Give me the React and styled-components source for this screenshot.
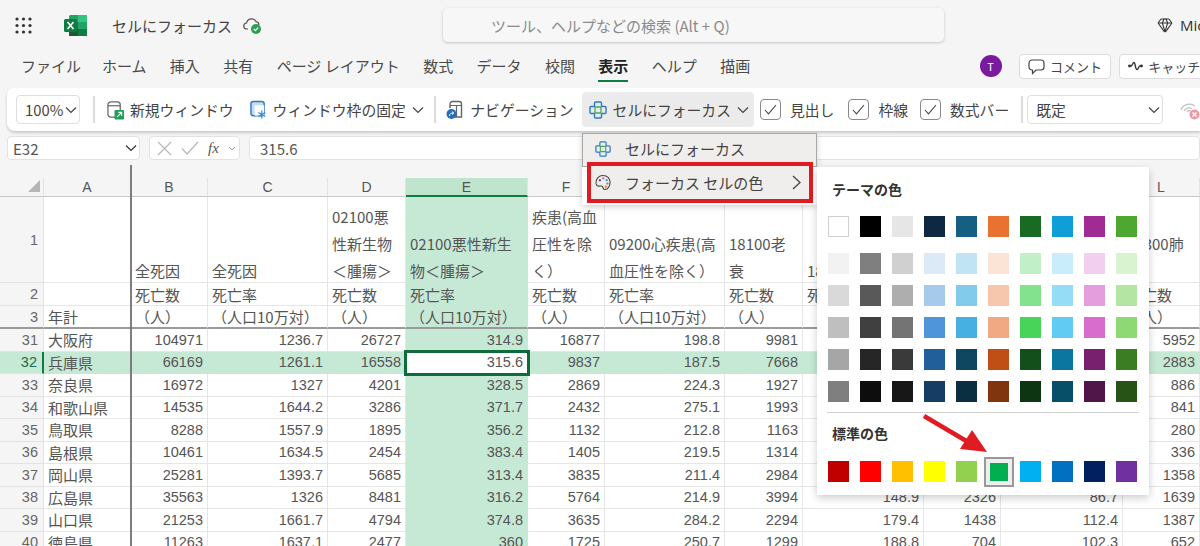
import { styled, createGlobalStyle } from "styled-components";
import { Gem } from "lucide-react";

const GlobalStyle = createGlobalStyle`
  html, body { margin: 0; padding: 0; background: #f5f5f5; }
  body { font-family: "Noto Sans CJK JP", "Noto Sans", sans-serif; color: #444; }
  svg { flex-shrink: 0; }
`;

const Page = styled.div`
  position: relative;
  width: 1200px;
  height: 546px;
  overflow: hidden;
  background: #f5f5f5;
`;

const TitleBar = styled.div`
  height: 50px;
  display: flex;
  align-items: center;
  padding-left: 15px;
`;

const DocTitle = styled.div`
  margin-left: 25px;
  font-size: 15px;
  color: #444;
  white-space: nowrap;
  flex-shrink: 0;
`;

const Search = styled.div`
  margin-left: 181px;
  width: 501px;
  height: 34px;
  box-sizing: border-box;
  padding-left: 48px;
  display: flex;
  align-items: center;
  flex-shrink: 0;
  background: #f7f7f7;
  border-radius: 5px;
  box-shadow: 0 1px 3px rgba(0, 0, 0, 0.2);
  font-size: 15px;
  color: #8a8a8a;
  white-space: nowrap;
`;

const Premium = styled.div`
  margin-left: 213px;
  display: flex;
  align-items: center;
  gap: 7px;
  font-family: "Open Sans", sans-serif;
  font-size: 15px;
  color: #333;
  flex-shrink: 0;
`;

const TabBar = styled.div`
  height: 38px;
  box-sizing: border-box;
  padding: 0 0 6px 21px;
  display: flex;
  align-items: center;
  gap: 23.4px;
`;

const Tab = styled.div`
  position: relative;
  margin-right: ${(p) => p.$mr || 0}px;
  font-size: 15px;
  line-height: 22px;
  font-weight: ${(p) => (p.$active ? 700 : 400)};
  color: ${(p) => (p.$active ? "#222" : "#4a4a4a")};
  white-space: nowrap;
  flex-shrink: 0;
  &::after {
    content: "";
    display: ${(p) => (p.$active ? "block" : "none")};
    position: absolute;
    left: 0;
    right: 0;
    bottom: -5px;
    height: 2px;
    background: #107c41;
  }
`;

const Avatar = styled.div`
  margin-left: 206px;
  width: 22px;
  height: 22px;
  border-radius: 50%;
  background: #7a1a9e;
  color: #fff;
  font-size: 11px;
  display: flex;
  align-items: center;
  justify-content: center;
  flex-shrink: 0;
`;

const PillButton = styled.div`
  margin-left: ${(p) => p.$ml}px;
  height: 25px;
  box-sizing: border-box;
  padding: 0 8px;
  display: flex;
  align-items: center;
  gap: 5px;
  flex-shrink: 0;
  background: #fff;
  border: 1px solid #dcdcdc;
  border-radius: 4px;
  font-size: 13px;
  color: #444;
  white-space: nowrap;
`;

const Ribbon = styled.div`
  margin-left: 7px;
  height: 43px;
  padding-left: 9px;
  display: flex;
  align-items: center;
  background: #fff;
  border-radius: 8px 0 0 8px;
  box-shadow: 0 2px 3px rgba(0, 0, 0, 0.18);
  font-size: 14.8px;
  color: #444;
  white-space: nowrap;
`;

const Separator = styled.div`
  margin-left: ${(p) => p.$ml}px;
  width: 2px;
  height: 27px;
  background: #dcdcdc;
  flex-shrink: 0;
`;

const SelectBox = styled.div`
  margin-left: ${(p) => p.$ml || 0}px;
  width: ${(p) => p.$w}px;
  height: 29px;
  box-sizing: border-box;
  padding: 0 2px 0 8px;
  display: flex;
  align-items: center;
  justify-content: space-between;
  flex-shrink: 0;
  background: #fff;
  border: 1px solid #e0e0e0;
  border-radius: 4px;
`;

const RibbonButton = styled.div`
  margin-left: ${(p) => p.$ml}px;
  display: flex;
  align-items: center;
  gap: ${(p) => p.$gap || 6}px;
  flex-shrink: 0;
`;

const ActiveRibbonButton = styled(RibbonButton)`
  height: 35px;
  padding: 0 5px 0 7px;
  background: #ebebeb;
  border-radius: 4px;
`;

const CheckBox = styled.div`
  width: 21px;
  height: 21px;
  box-sizing: border-box;
  display: flex;
  align-items: center;
  justify-content: center;
  border: 1px solid #8a8a8a;
  border-radius: 4px;
  color: #444;
`;

const FormulaBar = styled.div`
  margin-top: 5px;
  height: 24px;
  padding-left: 7px;
  display: flex;
`;

const FormulaBox = styled.div`
  box-sizing: border-box;
  margin-left: ${(p) => p.$ml || 0}px;
  width: ${(p) => (p.$w ? `${p.$w}px` : "auto")};
  flex: ${(p) => (p.$w ? "0 0 auto" : "1")};
  padding: 0 ${(p) => p.$pr || 0}px 0 ${(p) => p.$pl}px;
  display: flex;
  align-items: center;
  justify-content: ${(p) => (p.$between ? "space-between" : "flex-start")};
  background: #fff;
  border: 1px solid #e2e2e2;
  border-radius: 4px;
  font-size: 15px;
  color: #555;
`;

const FxText = styled.span`
  font-family: "Liberation Serif", serif;
  font-style: italic;
  font-size: 15px;
  color: #555;
`;

const Sheet = styled.div`
  position: relative;
  padding-top: 18px;
  display: grid;
  grid-template-columns: 44px 87px 77px 120px 78px 122px 77px 120px 78px 121px 77px 122px 77px 1fr;
  grid-template-rows: 19px 86px 23px 23px;
  grid-auto-rows: 22.5px;
`;

const FreezeLine = styled.div`
  position: absolute;
  left: 130px;
  top: 5px;
  bottom: 0;
  width: 2px;
  background: #7d7d7d;
  z-index: 2;
`;

const Corner = styled.div`
  display: flex;
  align-items: flex-end;
  justify-content: flex-end;
  padding: 0 3px 4px 0;
  border-right: 1px solid #e2e2e2;
  border-bottom: 1px solid #c8c8c8;
`;

const ColHead = styled.div`
  display: flex;
  align-items: center;
  justify-content: center;
  font-family: "Liberation Sans", sans-serif;
  font-size: 14px;
  color: #555;
  background: ${(p) => (p.$active ? "#bfe5cf" : "#f5f5f5")};
  border-right: 1px solid #e2e2e2;
  border-bottom: ${(p) => (p.$active ? "2px solid #107c41" : "1px solid #c8c8c8")};
`;

const RowHead = styled.div`
  display: flex;
  align-items: center;
  justify-content: flex-end;
  padding-right: 5px;
  font-family: "Liberation Sans", sans-serif;
  font-size: 14.5px;
  color: ${(p) => (p.$active ? "#1f6b43" : "#666")};
  background: ${(p) => (p.$active ? "#c6e9d5" : "#f5f5f5")};
  border-right: ${(p) => (p.$active ? "2px solid #107c41" : "1px solid #e2e2e2")};
  border-bottom: ${(p) => (p.$heavy ? "2px solid #9a9a9a" : "1px solid #e2e2e2")};
`;

const Cell = styled.div`
  position: relative;
  box-sizing: border-box;
  padding: 0 4px;
  display: flex;
  align-items: center;
  justify-content: ${(p) => (p.$num ? "flex-end" : "flex-start")};
  overflow: hidden;
  white-space: nowrap;
  font-family: ${(p) =>
    p.$num ? '"Liberation Sans", sans-serif' : '"Noto Sans CJK JP", sans-serif'};
  font-size: ${(p) => (p.$num ? 14.5 : 15)}px;
  color: #555;
  background: ${(p) => (p.$hl ? "#c6e9d5" : "#fff")};
  border-right: 1px solid ${(p) => (p.$hl ? "#c6e9d5" : "#e6e6e6")};
  border-bottom: ${(p) =>
    p.$heavy ? "2px solid #9a9a9a" : `1px solid ${p.$hl ? "#c6e9d5" : "#e6e6e6"}`};
`;

const HeadCell = styled(Cell)`
  flex-direction: column;
  align-items: flex-start;
  justify-content: flex-end;
  line-height: 27px;
  & > div:last-child {
    margin-bottom: -2px;
  }
`;

const FocusCell = styled(Cell)`
  background: #fff;
  overflow: visible;
  z-index: 1;
  outline: 3px solid #0e6b3a;
  outline-offset: -1px;
`;

const Menu = styled.div`
  position: absolute;
  left: 582px;
  top: 133px;
  width: 235px;
  display: flex;
  flex-direction: column;
  background: #fff;
  box-shadow: 0 2px 6px rgba(0, 0, 0, 0.18);
  font-size: 15px;
  color: #444;
  z-index: 3;
`;

const MenuItem = styled.div`
  height: 34px;
  box-sizing: border-box;
  padding: 0 0 3px 12px;
  display: flex;
  align-items: center;
  gap: 14px;
  background: #efeeec;
  border: 1px solid #a8a8a8;
`;

const MarkedMenuItem = styled.div`
  position: relative;
  height: 41px;
  box-sizing: border-box;
  margin: -5px 4px 2px 5px;
  padding: 0 8px 0 4px;
  display: flex;
  align-items: center;
  gap: 14px;
  background: #efeeec;
  border: 4px solid #e01b22;
`;

const ItemArrow = styled.span`
  margin-left: auto;
  display: flex;
`;

const PalettePanel = styled.div`
  position: absolute;
  left: 817px;
  top: 167px;
  width: 332px;
  height: 328px;
  box-sizing: border-box;
  padding: 13px 0 0 11px;
  background: #fff;
  box-shadow: 0 3px 8px rgba(0, 0, 0, 0.2);
  z-index: 3;
`;

const PaletteTitle = styled.div`
  margin: ${(p) => p.$mt || 0}px 0 ${(p) => p.$mb}px 4px;
  font-size: 14px;
  line-height: 18px;
  font-weight: 700;
  color: #333;
`;

const SwatchGrid = styled.div`
  display: grid;
  grid-template-columns: repeat(10, 21px);
  grid-auto-rows: 21px;
  gap: 11px;
  margin-bottom: ${(p) => p.$mb || 0}px;
`;

const Swatch = styled.div`
  box-sizing: border-box;
  width: ${(p) => (p.$selected ? 18 : 21)}px;
  height: ${(p) => (p.$selected ? 18 : 21)}px;
  place-self: center;
  background: ${(p) => p.$color};
  border: ${(p) => (p.$outlined ? "1px solid #cfcfcf" : "none")};
  box-shadow: ${(p) => (p.$selected ? "0 0 0 4px #eee, 0 0 0 6px #999" : "none")};
`;

const Divider = styled.div`
  width: 312px;
  height: 1px;
  margin-left: -1px;
  background: #d0d0d0;
`;

const ArrowMark = styled.svg`
  position: absolute;
  left: 918px;
  top: 410px;
  z-index: 4;
`;

const Chevron = ({ color = "#444" }) => (
  <svg width="12" height="8" viewBox="0 0 12 8">
    <path d="M1 1.5 L6 6.5 L11 1.5" fill="none" stroke={color} strokeWidth="1.2" />
  </svg>
);

const Tick = () => (
  <svg width="13" height="11" viewBox="0 0 13 11">
    <path d="M1 6 L4.5 9.8 L12 1" fill="none" stroke="#444" strokeWidth="1.1" />
  </svg>
);

const CancelMark = () => (
  <svg width="15" height="15" viewBox="0 0 15 15">
    <path d="M1 1 L14 14 M14 1 L1 14" stroke="#b8b8b8" strokeWidth="1.2" />
  </svg>
);

const EnterMark = () => (
  <svg width="18" height="14" viewBox="0 0 18 14">
    <path d="M1 7.5 L6 13 L17 1" fill="none" stroke="#b8b8b8" strokeWidth="1.2" />
  </svg>
);

const Waffle = () => (
  <svg width="17" height="17" viewBox="0 0 17 17" fill="#333">
    {[2, 8.5, 15].map((y) =>
      [2, 8.5, 15].map((x) => <circle key={`${x}-${y}`} cx={x} cy={y} r="1.6" />)
    )}
  </svg>
);

const ExcelLogo = () => (
  <svg width="23" height="21" viewBox="0 0 23 21" style={{ marginLeft: 32 }}>
    <rect x="5" y="0" width="18" height="21" rx="1.5" fill="#21a366" />
    <rect x="14" y="0" width="9" height="7" fill="#33c481" />
    <rect x="5" y="7" width="9" height="7" fill="#107c41" />
    <rect x="14" y="14" width="9" height="7" fill="#107c41" />
    <rect x="5" y="14" width="9" height="7" fill="#185c37" />
    <rect x="0" y="4" width="13" height="13" rx="1.5" fill="#107c41" />
    <path d="M3.5 7 L9.5 14 M9.5 7 L3.5 14" stroke="#fff" strokeWidth="1.6" />
  </svg>
);

const CloudSaved = () => (
  <svg width="19" height="19" viewBox="0 0 19 19" style={{ marginLeft: 11 }}>
    <path
      d="M5 13 H4 A3 3 0 0 1 3.6 7 A5 5 0 0 1 13 5.6 A3.4 3.4 0 0 1 16 9"
      fill="none"
      stroke="#555"
      strokeWidth="1.2"
    />
    <circle cx="13" cy="13" r="5" fill="#2e9e52" />
    <path d="M10.8 13 L12.4 14.6 L15.2 11.6" fill="none" stroke="#fff" strokeWidth="1.3" />
  </svg>
);

const NewWindowIcon = () => (
  <svg width="17" height="20" viewBox="0 0 18 20">
    <rect x="1" y="1.5" width="13" height="16" rx="3" fill="none" stroke="#666" strokeWidth="1.3" />
    <path d="M1 5.5 H14" stroke="#666" strokeWidth="1.3" />
    <rect x="8" y="10" width="10" height="10" rx="1" fill="#1f9d55" />
    <path d="M10.5 17.5 L15.5 12.5 M12 12.5 H15.5 V16" fill="none" stroke="#fff" strokeWidth="1.2" />
  </svg>
);

const FreezeIcon = () => (
  <svg width="17" height="20" viewBox="0 0 18 20">
    <rect x="1" y="1" width="14" height="15" rx="2.5" fill="#c4ddf5" stroke="#2f78c4" strokeWidth="1.5" />
    <rect x="5" y="5" width="10" height="11" fill="#fff" />
    <path
      d="M12.5 10.5 V19 M8.8 12.6 L16.2 16.9 M16.2 12.6 L8.8 16.9"
      stroke="#2f8ae0"
      strokeWidth="1.3"
    />
  </svg>
);

const NavIcon = () => (
  <svg width="17" height="20" viewBox="0 0 17 20">
    <path d="M4 8 V4 A2.5 2.5 0 0 1 6.5 1.5 H13 A2.5 2.5 0 0 1 15.5 4 V17 H9" fill="none" stroke="#666" strokeWidth="1.4" />
    <path d="M4 5.5 H15.5 M10.5 5.5 V17" stroke="#666" strokeWidth="1.2" />
    <circle cx="5.5" cy="14" r="5" fill="#2470b8" />
    <path d="M3.5 16 C3.5 13.5 5 13 7.5 13 M6 11.5 L7.8 13 L6 14.6" fill="none" stroke="#fff" strokeWidth="1" />
  </svg>
);

const FocusIcon = ({ size = 18 }) => (
  <svg width={size} height={size} viewBox="0 0 18 18">
    <path
      d="M6.5 1 H11.5 A1 1 0 0 1 12.5 2 V5.5 H16 A1 1 0 0 1 17 6.5 V11.5 A1 1 0 0 1 16 12.5 H12.5 V16 A1 1 0 0 1 11.5 17 H6.5 A1 1 0 0 1 5.5 16 V12.5 H2 A1 1 0 0 1 1 11.5 V6.5 A1 1 0 0 1 2 5.5 H5.5 V2 A1 1 0 0 1 6.5 1 Z"
      fill="none"
      stroke="#2b7cc7"
      strokeWidth="1.4"
    />
    <rect x="6" y="6" width="6" height="6" rx="1" fill="#dff0e2" stroke="#4aa564" strokeWidth="1.3" />
  </svg>
);

const PaletteIcon = () => (
  <svg width="16" height="17" viewBox="0 0 17 17">
    <path
      d="M8.5 1 C13 1 16 4 16 8 C16 12 14 16 10.5 16 C8.5 16 9 13.5 7.5 12.5 C6 11.5 4.5 13 2.5 12 C0.5 10.5 1 7 2 5 C3.4 2.4 6 1 8.5 1 Z"
      fill="none"
      stroke="#444"
      strokeWidth="1.2"
    />
    <circle cx="5.2" cy="6.2" r="1.2" fill="#444" />
    <circle cx="8.8" cy="4.2" r="1.2" fill="#d65bb5" />
    <circle cx="12.4" cy="6" r="1.2" fill="#3d8fd6" />
    <circle cx="13.2" cy="9.6" r="1.2" fill="#4aa564" />
    <circle cx="11.6" cy="13" r="1.2" fill="#e07b39" />
  </svg>
);

const MenuArrow = () => (
  <svg width="9" height="15" viewBox="0 0 9 15">
    <path d="M1 1 L8 7.5 L1 14" fill="none" stroke="#444" strokeWidth="1.3" />
  </svg>
);

const EyeOffIcon = () => (
  <svg width="20" height="20" viewBox="0 0 20 20" style={{ marginLeft: 17 }}>
    <path d="M1 10 A9 9 0 0 1 15 6 M4 11 A6 6 0 0 1 12 8.5 M7 12 A3 3 0 0 1 11 11" fill="none" stroke="#c2c2c2" strokeWidth="1.3" />
    <circle cx="14.5" cy="14.5" r="5" fill="#ec9aa0" />
    <path d="M12.5 12.5 L16.5 16.5 M16.5 12.5 L12.5 16.5" stroke="#fff" strokeWidth="1.4" />
  </svg>
);

const CommentIcon = () => (
  <svg width="17" height="17" viewBox="0 0 17 17" style={{ marginTop: 1 }}>
    <path
      d="M4 2 H13 A3 3 0 0 1 16 5 V9 A3 3 0 0 1 13 12 H8 L4.5 15.5 V12 H4 A3 3 0 0 1 1 9 V5 A3 3 0 0 1 4 2 Z"
      fill="none"
      stroke="#444"
      strokeWidth="1.2"
    />
  </svg>
);

const CatchUpIcon = () => (
  <svg width="15" height="10" viewBox="0 0 15 10">
    <path d="M1 5 H3 C4.5 5 4.5 1.5 6 1.5 C7.5 1.5 7 8.5 9 8.5 C10.5 8.5 10.5 5 12 5 H14" fill="none" stroke="#333" strokeWidth="1.4" />
    <circle cx="1.5" cy="5" r="1.4" fill="#333" />
    <circle cx="13.5" cy="5" r="1.4" fill="#333" />
  </svg>
);

const tabs = ["ファイル", "ホーム", "挿入", "共有", "ページ レイアウト", "数式", "データ", "校閲", "表示", "ヘルプ", "描画"];
// the letter heads of I, J, K lie under the palette panel
const letters = ["A", "B", "C", "D", "E", "F", "G", "H", "I", "J", "K", "L", ""];
const headLines = [
  [],
  ["全死因"],
  ["全死因"],
  ["02100悪", "性新生物", "＜腫瘍＞"],
  ["02100悪性新生", "物＜腫瘍＞"],
  ["疾患(高血", "圧性を除", "く）"],
  ["09200心疾患(高", "血圧性を除く）"],
  ["18100老", "衰"],
  ["18100老衰"],
  [],
  [],
  ["06300肺", "\u00a0"],
  [],
];
const unit = ["", "死亡数", "死亡率", "死亡数", "死亡率", "死亡数", "死亡率", "死亡数", "死亡率", "死亡数", "死亡率", "死亡数", ""];
const rate = ["年計", "（人）", "（人口10万対）", "（人）", "（人口10万対）", "（人）", "（人口10万対）", "（人）", "（人口10万対）", "（人）", "（人口10万対）", "（人）", ""];

const rows = [
  [31, "大阪府", 104971, 1236.7, 26727, 314.9, 16877, 198.8, 9981, 171.4, 6533, 87.3, 5952],
  [32, "兵庫県", 66169, 1261.1, 16558, 315.6, 9837, 187.5, 7668, 146.2, 4120, 78.5, 2883],
  [33, "奈良県", 16972, 1327, 4201, 328.5, 2869, 224.3, 1927, 150.7, 990, 77.4, 886],
  [34, "和歌山県", 14535, 1644.2, 3286, 371.7, 2432, 275.1, 1993, 225.5, 850, 96.2, 841],
  [35, "鳥取県", 8288, 1557.9, 1895, 356.2, 1132, 212.8, 1163, 218.6, 520, 97.7, 280],
  [36, "島根県", 10461, 1634.5, 2454, 383.4, 1405, 219.5, 1314, 205.3, 610, 95.3, 336],
  [37, "岡山県", 25281, 1393.7, 5685, 313.4, 3835, 211.4, 2984, 164.5, 1580, 87.1, 1358],
  [38, "広島県", 35563, 1326, 8481, 316.2, 5764, 214.9, 3994, 148.9, 2326, 86.7, 1639],
  [39, "山口県", 21253, 1661.7, 4794, 374.8, 3635, 284.2, 2294, 179.4, 1438, 112.4, 1387],
  [40, "徳島県", 11263, 1637.1, 2477, 360, 1725, 250.7, 1299, 188.8, 704, 102.3, 652],
];

const themeColors = [
  ["#ffffff", "#000000", "#e6e6e6", "#0e2841", "#156082", "#e97132", "#196b24", "#0f9ed5", "#a02b93", "#4ea72e"],
  ["#f2f2f2", "#7f7f7f", "#d0d0d0", "#dceaf7", "#c1e4f5", "#fbe3d6", "#c1f0c8", "#caedfb", "#f2cfee", "#d9f2d0"],
  ["#d9d9d9", "#595959", "#aeaeae", "#a6caec", "#83cbeb", "#f6c6ad", "#83e28e", "#95dcf7", "#e59edd", "#b4e5a2"],
  ["#bfbfbf", "#404040", "#747474", "#4e95d9", "#45b0e1", "#f1a983", "#47d459", "#61cbf3", "#d86dcd", "#8ed973"],
  ["#a6a6a6", "#262626", "#3a3a3a", "#215f9a", "#0f4761", "#c04f15", "#124f1a", "#0b769f", "#78206e", "#3b7d23"],
  ["#7f7f7f", "#0d0d0d", "#171717", "#163e64", "#0a2f41", "#80350e", "#0d3512", "#074f69", "#501549", "#275317"],
];
const standardColors = ["#c00000", "#ff0000", "#ffc000", "#ffff00", "#92d050", "#00b050", "#00b0f0", "#0070c0", "#002060", "#7030a0"];

function SheetGrid() {
  return (
    <Sheet>
      <FreezeLine />
      <Corner>
        <svg width="12" height="12" viewBox="0 0 12 12">
          <path d="M12 0 V12 H0 Z" fill="#b5b5b5" />
        </svg>
      </Corner>
      {letters.map((l, i) => (
        <ColHead key={i} $active={l === "E"}>{l}</ColHead>
      ))}

      <RowHead>1</RowHead>
      {headLines.map((lines, i) => (
        <HeadCell key={i} $hl={i === 4}>
          {lines.map((t, j) => (
            <div key={j}>{t}</div>
          ))}
        </HeadCell>
      ))}

      <RowHead>2</RowHead>
      {unit.map((t, i) => (
        <Cell key={i} $hl={i === 4}>{t}</Cell>
      ))}

      <RowHead $heavy>3</RowHead>
      {rate.map((t, i) => (
        <Cell key={i} $hl={i === 4} $heavy>{t}</Cell>
      ))}

      {rows.map(([no, pref, ...values]) => {
        const active = no === 32;
        return [
          <RowHead key={`h${no}`} $active={active}>{no}</RowHead>,
          <Cell key={`p${no}`} $hl={active}>{pref}</Cell>,
          ...values.map((v, i) =>
            active && i === 3 ? (
              <FocusCell key={`${no}-${i}`} $num>{v}</FocusCell>
            ) : (
              <Cell key={`${no}-${i}`} $num $hl={active || i === 3}>{v}</Cell>
            )
          ),
          <Cell key={`e${no}`} $hl={active} />,
        ];
      })}
    </Sheet>
  );
}

export default function App() {
  return (
    <Page>
      <GlobalStyle />
      <TitleBar>
        <Waffle />
        <ExcelLogo />
        <DocTitle>セルにフォーカス</DocTitle>
        <CloudSaved />
        <Search>ツール、ヘルプなどの検索 (Alt + Q)</Search>
        <Premium>
          <Gem size={16} strokeWidth={1.6} />
          Microsoft
        </Premium>
      </TitleBar>

      <TabBar>
        {tabs.map((t, i) => (
          <Tab key={t} $active={t === "表示"} $mr={i === 0 ? -2.5 : 0}>{t}</Tab>
        ))}
        <Avatar>T</Avatar>
        <PillButton $ml={-6}>
          <CommentIcon />
          コメント
        </PillButton>
        <PillButton $ml={-15}>
          <CatchUpIcon />
          キャッチアップ
        </PillButton>
      </TabBar>

      <Ribbon>
        <SelectBox $w={64}>
          100%
          <Chevron />
        </SelectBox>
        <Separator $ml={13} />
        <RibbonButton $ml={12}>
          <NewWindowIcon />
          新規ウィンドウ
        </RibbonButton>
        <RibbonButton $ml={16}>
          <FreezeIcon />
          <span>ウィンドウ枠の固定</span>
          <Chevron />
        </RibbonButton>
        <Separator $ml={10} />
        <RibbonButton $ml={10.5} $gap={7}>
          <NavIcon />
          ナビゲーション
        </RibbonButton>
        <ActiveRibbonButton $ml={8}>
          <FocusIcon />
          セルにフォーカス
          <Chevron />
        </ActiveRibbonButton>
        <RibbonButton $ml={6} $gap={9}>
          <CheckBox><Tick /></CheckBox>
          見出し
        </RibbonButton>
        <RibbonButton $ml={14} $gap={9}>
          <CheckBox><Tick /></CheckBox>
          枠線
        </RibbonButton>
        <RibbonButton $ml={12} $gap={9}>
          <CheckBox><Tick /></CheckBox>
          数式バー
        </RibbonButton>
        <Separator $ml={12} />
        <SelectBox $ml={4} $w={136}>
          既定
          <Chevron />
        </SelectBox>
        <EyeOffIcon />
      </Ribbon>

      <FormulaBar>
        <FormulaBox $w={133} $pl={5} $pr={2} $between>
          E32
          <Chevron color="#333" />
        </FormulaBox>
        <FormulaBox $ml={9} $w={91} $pl={7} $pr={3} $between>
          <CancelMark />
          <EnterMark />
          <FxText>fx</FxText>
          <svg width="8" height="5" viewBox="0 0 8 5">
            <path d="M1 1 L4 4 L7 1" fill="none" stroke="#999" strokeWidth="1" />
          </svg>
        </FormulaBox>
        <FormulaBox $ml={9} $pl={10}>315.6</FormulaBox>
      </FormulaBar>

      <SheetGrid />

      <Menu>
        <MenuItem>
          <FocusIcon size={16} />
          セルにフォーカス
        </MenuItem>
        <MarkedMenuItem>
          <PaletteIcon />
          フォーカス セルの色
          <ItemArrow><MenuArrow /></ItemArrow>
        </MarkedMenuItem>
      </Menu>

      <PalettePanel>
        <PaletteTitle $mb={18}>テーマの色</PaletteTitle>
        <SwatchGrid $mb={16}>
          {themeColors[0].map((c, i) => (
            <Swatch key={i} $color={c} $outlined={i === 0} />
          ))}
        </SwatchGrid>
        <SwatchGrid $mb={10}>
          {themeColors.slice(1).flat().map((c, i) => (
            <Swatch key={i} $color={c} />
          ))}
        </SwatchGrid>
        <Divider />
        <PaletteTitle $mt={11} $mb={19}>標準の色</PaletteTitle>
        <SwatchGrid>
          {standardColors.map((c) => (
            <Swatch key={c} $color={c} $selected={c === "#00b050"} />
          ))}
        </SwatchGrid>
      </PalettePanel>

      <ArrowMark width="72" height="46" viewBox="0 0 72 46">
        <path d="M6 6 L50 32" stroke="#e01b22" strokeWidth="4.5" />
        <path d="M69 42 L42 39 L54 20 Z" fill="#e01b22" />
      </ArrowMark>
    </Page>
  );
}
